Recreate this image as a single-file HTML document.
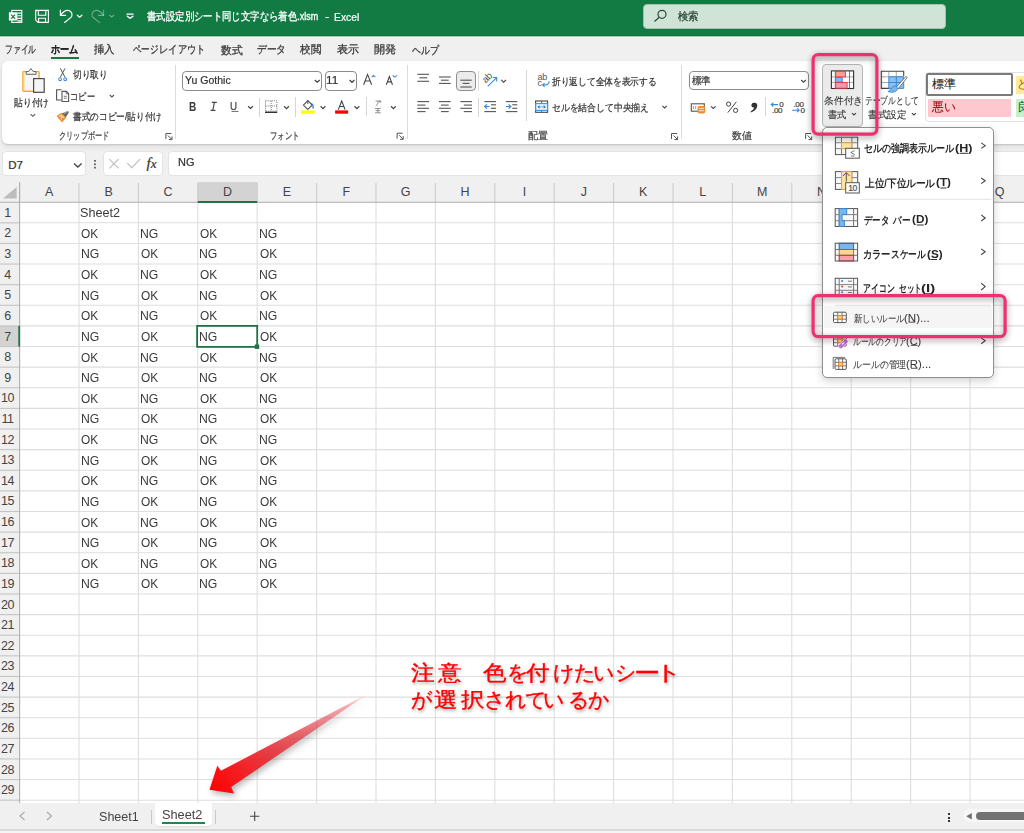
<!DOCTYPE html><html lang="ja"><head><meta charset="utf-8"><style>
*{margin:0;padding:0;box-sizing:border-box}
html,body{width:1024px;height:833px;overflow:hidden;background:#f0f0f0;font-family:"Liberation Sans",sans-serif;color:#262626}
.a{position:absolute}
.t{position:absolute;white-space:nowrap;line-height:1;transform-origin:0 0;-webkit-text-stroke:0.22px}
svg{position:absolute;overflow:visible}
</style></head><body>
<div class="a" style="left:0;top:0;width:1024px;height:35px;background:#127b44"></div><div class="a" style="left:0;top:35px;width:1024px;height:1px;background:#0a733d"></div><div class="a" style="left:0;top:36px;width:1024px;height:1px;background:#a8c9b4"></div><div class="a" style="left:0;top:37px;width:1024px;height:1px;background:#f5f3f3"></div>
<div class="a" style="left:643px;top:4px;width:303px;height:25px;background:#cfe3d6;border:1px solid #a3c2ad;border-radius:4px"></div>
<div class="t" style="left:677.8px;top:11.05px;font-size:10.5px;font-weight:400;color:#1e3b2a;transform:scaleX(0.9409);">検索</div>
<div class="t" style="left:146.7px;top:11.35px;font-size:10.5px;font-weight:400;color:#fff;transform:scaleX(0.8535);-webkit-text-stroke:0.3px;">書式設定別シート同じ文字なら着色.xlsm</div>
<div class="t" style="left:325.0px;top:10.6px;font-size:10.5px;font-weight:400;color:#fff;transform:scaleX(1.2);">-</div>
<div class="t" style="left:334.42px;top:11.9px;font-size:10.5px;font-weight:400;color:#fff;transform:scaleX(0.9833);-webkit-text-stroke:0.2px;">Excel</div>
<svg style="left:0;top:0" width="1" height="1">
<g fill="none" stroke="#fff" stroke-width="1.1">
<rect x="11.8" y="10.4" width="10" height="12"/>
<path d="M17.4 13.1 H21.8 M17.4 15.8 H21.8 M17.4 18.4 H21.8 M17.4 20.9 H21.8"/>
<path d="M35.7 10.4 H48.4 V22.4 H38 L35.7 20.1 Z"/>
<path d="M38.3 10.4 V15.2 H45.8 V10.4"/>
<path d="M38.6 22.4 V18.3 H45.5 V22.4"/>
</g>
<rect x="8.9" y="12.3" width="8.5" height="8.2" fill="#fff"/>
<path d="M11.2 14.6 L15.1 18.9 M15.1 14.6 L11.2 18.9" stroke="#127b44" stroke-width="1.3"/>
<g fill="none" stroke="#fff" stroke-width="1.2" stroke-linecap="round" stroke-linejoin="round">
<path d="M60.6 15.2 C63 11.8 65.5 10.2 68 10.4 C71 10.7 72.6 13.5 71.8 16.2 C71.5 17.2 71 17.8 64.6 22.4"/>
<path d="M60.4 10.2 V15.4 H65.6"/>
<path d="M77.3 15.2 L79.6 17.2 L81.9 15.2"/>
<path d="M127 14.1 H133.1 M127.3 16.2 L130.1 18.3 L132.9 16.2" stroke-width="1.4"/>
</g>
<g fill="none" stroke="rgba(255,255,255,.38)" stroke-width="1.1" stroke-linecap="round" stroke-linejoin="round">
<path d="M103.4 15.2 C101 11.8 98.5 10.2 96 10.4 C93 10.7 91.4 13.5 92.2 16.2 C92.5 17.2 93 17.8 99.6 22.6"/>
<path d="M103.6 10.2 V15.4 H98.4"/>
<path d="M109.6 15.3 L111.7 17 L113.8 15.3"/>
</g>
</svg>
<svg style="left:0;top:0" width="1" height="1"><g fill="none" stroke="#2b4a36" stroke-width="1.2"><circle cx="662" cy="14.3" r="4"/><path d="M659.2 17.2 L654.5 21.5"/></g></svg>
<div class="t" style="left:4.89px;top:44.2px;font-size:11.0px;font-weight:400;color:#3b3b3b;transform:scaleX(0.707);-webkit-text-stroke:0.3px;">ファイル</div>
<div class="t" style="left:51.2px;top:44.2px;font-size:11.0px;font-weight:700;color:#262626;transform:scaleX(0.8303);-webkit-text-stroke:0.12px;">ホーム</div>
<div class="t" style="left:94.3px;top:44.2px;font-size:11.0px;font-weight:400;color:#3b3b3b;transform:scaleX(0.9409);-webkit-text-stroke:0.3px;">挿入</div>
<div class="t" style="left:132.5px;top:44.2px;font-size:11.0px;font-weight:400;color:#3b3b3b;transform:scaleX(0.7719);-webkit-text-stroke:0.3px;">ページ</div>
<div class="t" style="left:221.2px;top:44.7px;font-size:11.0px;font-weight:400;color:#3b3b3b;transform:scaleX(0.9818);-webkit-text-stroke:0.3px;">数式</div>
<div class="t" style="left:257.12px;top:44.2px;font-size:11.0px;font-weight:400;color:#3b3b3b;transform:scaleX(0.8833);-webkit-text-stroke:0.3px;">データ</div>
<div class="t" style="left:300.2px;top:44.2px;font-size:11.0px;font-weight:400;color:#3b3b3b;transform:scaleX(0.9591);-webkit-text-stroke:0.3px;">校閲</div>
<div class="t" style="left:336.7px;top:44.2px;font-size:11.0px;font-weight:400;color:#3b3b3b;transform:scaleX(1.0048);-webkit-text-stroke:0.3px;">表示</div>
<div class="t" style="left:374.0px;top:44.2px;font-size:11.0px;font-weight:400;color:#3b3b3b;transform:scaleX(1.0136);-webkit-text-stroke:0.3px;">開発</div>
<div class="t" style="left:411.5px;top:44.7px;font-size:11.0px;font-weight:400;color:#3b3b3b;transform:scaleX(0.8182);-webkit-text-stroke:0.3px;">ヘルプ</div>
<div class="t" style="left:159.15px;top:44.2px;font-size:11.0px;font-weight:400;color:#3b3b3b;transform:scaleX(0.849);-webkit-text-stroke:0.3px;">レイアウト</div>
<div class="a" style="left:51px;top:57px;width:28px;height:2px;background:#177a43"></div>
<div class="a" style="left:2.4px;top:60.8px;width:1040px;height:83.2px;background:#fff;border-radius:6px;box-shadow:0 1px 2px rgba(0,0,0,.14),0 3px 6px rgba(0,0,0,.07)"></div>
<div class="t" style="left:14.3px;top:97.75px;font-size:10.0px;font-weight:400;color:#333;transform:scaleX(0.8795);">貼り付け</div>
<div class="t" style="left:72.8px;top:69.9px;font-size:10.0px;font-weight:400;color:#333;transform:scaleX(0.8684);">切り取り</div>
<div class="t" style="left:70.45px;top:91.65px;font-size:10.0px;font-weight:400;color:#333;transform:scaleX(0.8259);">コピー</div>
<div class="t" style="left:72.8px;top:112.45px;font-size:10.0px;font-weight:400;color:#333;transform:scaleX(0.8647);">書式のコピー/貼り付け</div>
<div class="t" style="left:58.68px;top:131.3px;font-size:10.0px;font-weight:400;color:#444;transform:scaleX(0.7191);">クリップボード</div>
<div class="t" style="left:269.76px;top:130.9px;font-size:10.0px;font-weight:400;color:#444;transform:scaleX(0.7432);">フォント</div>
<div class="t" style="left:552.4px;top:77.0px;font-size:10.0px;font-weight:400;color:#333;transform:scaleX(0.8714);">折り返して全体を表示する</div>
<div class="t" style="left:551.52px;top:102.75px;font-size:10.0px;font-weight:400;color:#333;transform:scaleX(0.8833);">セルを結合して中央揃え</div>
<div class="t" style="left:527.5px;top:131.05px;font-size:10.0px;font-weight:400;color:#444;transform:scaleX(1.0053);">配置</div>
<div class="t" style="left:732.0px;top:130.7px;font-size:10.0px;font-weight:400;color:#444;transform:scaleX(0.99);">数値</div>
<div class="t" style="left:865.26px;top:96.4px;font-size:10.0px;font-weight:400;color:#333;transform:scaleX(0.7701);-webkit-text-stroke:0.1px;">テーブルとして</div>
<div class="t" style="left:868.0px;top:109.5px;font-size:10.0px;font-weight:400;color:#333;transform:scaleX(0.9692);-webkit-text-stroke:0.1px;">書式設定</div>
<div class="a" style="left:175px;top:65px;width:1px;height:74px;background:#dcdcdc"></div>
<div class="a" style="left:406.5px;top:65px;width:1px;height:74px;background:#dcdcdc"></div>
<div class="a" style="left:681px;top:65px;width:1px;height:74px;background:#dcdcdc"></div>
<div class="a" style="left:259.1px;top:97.5px;width:1px;height:19.299999999999997px;background:#d6d6d6"></div>
<div class="a" style="left:294.9px;top:97.4px;width:1px;height:19.19999999999999px;background:#d6d6d6"></div>
<div class="a" style="left:365.5px;top:97.4px;width:1px;height:19.099999999999994px;background:#d6d6d6"></div>
<div class="a" style="left:478.1px;top:71px;width:1px;height:19.5px;background:#d6d6d6"></div>
<div class="a" style="left:478.1px;top:97.5px;width:1px;height:19.299999999999997px;background:#d6d6d6"></div>
<div class="a" style="left:526.1px;top:70px;width:1px;height:50.599999999999994px;background:#d6d6d6"></div>
<div class="a" style="left:765.4px;top:97px;width:1px;height:19px;background:#d6d6d6"></div>
<svg style="left:0;top:0" width="1" height="1"><path d="M165.9 139 V133.5 H171.4" stroke="#555" stroke-width="1" fill="none"/><path d="M167.9 135.5 L171.9 139.5 M172.0 136.4 V139.6 H168.8" stroke="#555" stroke-width="1" fill="none"/><path d="M397.1 138.7 V133.2 H402.6" stroke="#555" stroke-width="1" fill="none"/><path d="M399.1 135.2 L403.1 139.2 M403.20000000000005 136.1 V139.29999999999998 H400.0" stroke="#555" stroke-width="1" fill="none"/><path d="M671.5 139 V133.5 H677" stroke="#555" stroke-width="1" fill="none"/><path d="M673.5 135.5 L677.5 139.5 M677.6 136.4 V139.6 H674.4" stroke="#555" stroke-width="1" fill="none"/><path d="M805.6 139 V133.5 H811.1" stroke="#555" stroke-width="1" fill="none"/><path d="M807.6 135.5 L811.6 139.5 M811.7 136.4 V139.6 H808.5" stroke="#555" stroke-width="1" fill="none"/></svg>
<svg style="left:0;top:0" width="1" height="1">
<rect x="22.9" y="71.7" width="16.2" height="19.6" rx="0.8" fill="#f6f5f5" stroke="#f0a22e" stroke-width="1.3"/>
<path d="M24 72.6 V90.3 H33" stroke="#fbd96a" stroke-width="0.8" fill="none"/>
<path d="M26.2 74.3 V71.5 H28.6 L30.9 68.6 L33.2 71.5 H36 V74.3 Z" fill="#f6f5f5" stroke="#666" stroke-width="1"/>
<rect x="33.6" y="78.6" width="10.6" height="13.7" fill="#f6f5f5" stroke="#4a4a4a" stroke-width="1.2"/>
<path d="M30.6 114.2 L32.9 116.3 L35.2 114.2" stroke="#555" stroke-width="1.1" fill="none"/>
<path d="M60.3 68.4 L65 77.2 M65 68.4 L60.3 77.2" stroke="#555" stroke-width="1"/>
<circle cx="60.1" cy="79.2" r="1.4" fill="#fff" stroke="#3a8ee0" stroke-width="1.1"/>
<circle cx="65.2" cy="79.2" r="1.4" fill="#fff" stroke="#3a8ee0" stroke-width="1.1"/>
<path d="M61.5 89.7 H56.6 V100 H61.5" stroke="#555" stroke-width="1.1" fill="none"/>
<path d="M62 91.4 H66.4 L68.6 93.6 V101.5 H62 Z" fill="#fff" stroke="#555" stroke-width="1.1"/>
<path d="M66.2 91.5 V93.8 H68.5 M63.8 96.3 H66.8 M63.8 98.2 H66.8" stroke="#555" stroke-width="0.8" fill="none"/>
<path d="M109.8 95 L111.9 97 L114 95" stroke="#555" stroke-width="1.1" fill="none"/>
<path d="M56.5 116 L61.3 112.8 L66.4 117.4 L62 122.4 Z" fill="#f0922e"/>
<path d="M58.6 116.3 L61.3 114.3 L64.6 117.3 L61.9 120.2 Z" fill="#fbd08a"/>
<circle cx="60" cy="117.6" r="0.7" fill="#e04040"/><circle cx="62.6" cy="119" r="0.7" fill="#e04040"/>
<path d="M61.7 113.6 L65.9 117.3 L69 111.9 L67.6 110.9 Z" fill="#666"/>
<path d="M63.6 113.9 L67.6 111.5" stroke="#ddd" stroke-width="0.7"/>
</svg>
<div class="a" style="left:182.3px;top:71.1px;width:140px;height:19.6px;background:#fff;border:1px solid #8c8c8c;border-radius:4px"></div>
<div class="a" style="left:324.6px;top:71.1px;width:32.4px;height:19.6px;background:#fff;border:1px solid #8c8c8c;border-radius:4px"></div>
<div class="t" style="left:185.3px;top:75.2px;font-size:11.0px;font-weight:400;color:#333;transform:scaleX(0.9583);">Yu Gothic</div>
<div class="t" style="left:326.23px;top:75.2px;font-size:11.0px;font-weight:400;color:#333;transform:scaleX(1.07);">11</div>
<svg style="left:0;top:0" width="1" height="1">
<path d="M314.8 80 L317.3 82.3 L319.8 80 M349.6 80 L352 82.3 L354.4 80" stroke="#444" stroke-width="1.2" fill="none"/>
<path d="M363.6 84.7 L367.6 74.4 L371.6 84.7 M365.1 81 H370.1" stroke="#444" stroke-width="1.1" fill="none"/>
<path d="M371.6 77.2 L373.5 75.5 L375.4 77.2" stroke="#3a8ee0" stroke-width="1.1" fill="none"/>
<path d="M386.3 84.7 L389.4 76.6 L392.5 84.7 M387.5 81.9 H391.3" stroke="#444" stroke-width="1.1" fill="none"/>
<path d="M392.6 75.4 L394.8 77.1 L397 75.4" stroke="#3a8ee0" stroke-width="1.2" fill="none"/>
<path d="M248.1 106.2 L250.5 108.5 L252.9 106.2 M284.1 106.3 L286.5 108.6 L288.9 106.3 M320.6 106.3 L323 108.6 L325.4 106.3 M354.5 106.3 L356.9 108.6 L359.3 106.3 M391 106.3 L393.4 108.6 L395.8 106.3" stroke="#444" stroke-width="1.2" fill="none"/>
<path d="M231.6 111.4 H238.4" stroke="#555" stroke-width="0.9"/>
<rect x="265.5" y="100.8" width="11.4" height="10.4" fill="none" stroke="#666" stroke-width="0.9" stroke-dasharray="1 1.1"/>
<path d="M271.2 100.8 V111 M265.5 106 H277" stroke="#666" stroke-width="0.9" stroke-dasharray="1 1.1"/>
<path d="M265 112.3 H277.2" stroke="#333" stroke-width="1.4"/>
<path d="M303.4 105.1 L307.8 100.6 L312.2 105 L307.8 109.5 Z" fill="#fff" stroke="#555" stroke-width="1.1"/>
<path d="M307.8 100.6 L307.8 104" stroke="#555" stroke-width="1"/>
<path d="M311.2 103.5 C312.8 104.2 313.5 105.8 313 108.6" stroke="#2f7fd0" stroke-width="1.3" fill="none"/>
<rect x="301" y="110.4" width="13.7" height="3.4" fill="#ffff00"/>
<path d="M338.3 109.6 L341.7 101 L345.1 109.6 M339.5 106.5 H344" stroke="#444" stroke-width="1.1" fill="none"/>
<rect x="335.1" y="110.4" width="13" height="3.3" fill="#ff0000"/>
<path d="M375.6 101 H380.2 M378.2 101 C378.2 103.5 377.4 104.8 375.8 105.8 M379.8 100.6 V102.6 M380.8 100.6 V102.6" stroke="#777" stroke-width="0.8" fill="none"/>
<path d="M375 108.5 H380.8 M375.6 110.6 H380.2 M375 112.8 H380.8 M377.9 108.5 V112.8" stroke="#888" stroke-width="0.9" fill="none"/>
</svg>
<div class="t" style="left:189.2px;top:101.2px;font-size:12px;font-weight:bold;color:#3a3a3a;-webkit-text-stroke:0;transform:scaleX(.84)">B</div>
<svg style="left:0;top:0" width="1" height="1"><path d="M211.8 102.4 H216.8 M210.6 110.4 H215.4 M214.4 102.4 L212.8 110.4" stroke="#444" stroke-width="1.1" fill="none"/></svg>
<div class="t" style="left:230.4px;top:100.8px;font-size:11.5px;color:#444;transform:scaleX(.85)">U</div>
<svg style="left:0;top:0" width="1" height="1"><path d="M417.3 74.3 H429" stroke="#555" stroke-width="1.1"/><path d="M419.3 77.8 H427.3" stroke="#555" stroke-width="1.1"/><path d="M417.3 81.3 H429" stroke="#555" stroke-width="1.1"/><path d="M439 77 H450.7" stroke="#555" stroke-width="1.1"/><path d="M441 80.2 H448.7" stroke="#555" stroke-width="1.1"/><path d="M439 83.4 H450.7" stroke="#555" stroke-width="1.1"/><path d="M460 80.2 H472" stroke="#555" stroke-width="1.1"/><path d="M462.4 83.4 H469.6" stroke="#555" stroke-width="1.1"/><path d="M460 87 H472" stroke="#555" stroke-width="1.1"/><path d="M417.3 101.6 H429" stroke="#555" stroke-width="1.1"/><path d="M417.3 105.1 H425.5" stroke="#555" stroke-width="1.1"/><path d="M417.3 108.3 H429" stroke="#555" stroke-width="1.1"/><path d="M417.3 111.6 H425.5" stroke="#555" stroke-width="1.1"/><path d="M439 101.6 H450.7" stroke="#555" stroke-width="1.1"/><path d="M441 105.1 H448.7" stroke="#555" stroke-width="1.1"/><path d="M439 108.3 H450.7" stroke="#555" stroke-width="1.1"/><path d="M441 111.6 H448.7" stroke="#555" stroke-width="1.1"/><path d="M460.3 101.6 H472" stroke="#555" stroke-width="1.1"/><path d="M463.8 105.1 H472" stroke="#555" stroke-width="1.1"/><path d="M460.3 108.3 H472" stroke="#555" stroke-width="1.1"/><path d="M463.8 111.6 H472" stroke="#555" stroke-width="1.1"/><path d="M484.3 101.6 H496" stroke="#555" stroke-width="1.1"/><path d="M491 104.8 H496" stroke="#555" stroke-width="1.1"/><path d="M491 108.3 H496" stroke="#555" stroke-width="1.1"/><path d="M484.3 111.6 H496" stroke="#555" stroke-width="1.1"/><path d="M505.8 101.6 H517.3" stroke="#555" stroke-width="1.1"/><path d="M512.3 104.8 H517.3" stroke="#555" stroke-width="1.1"/><path d="M512.3 108.3 H517.3" stroke="#555" stroke-width="1.1"/><path d="M505.8 111.6 H517.3" stroke="#555" stroke-width="1.1"/><path d="M489.6 106.5 H484.8 M486.9 104.4 L484.7 106.5 L486.9 108.6" stroke="#2f8ee0" stroke-width="1.2" fill="none"/><path d="M505.9 106.5 H510.7 M508.6 104.4 L510.8 106.5 L508.6 108.6" stroke="#2f8ee0" stroke-width="1.2" fill="none"/><path d="M487.8 86.4 L496.6 77.6 M492.8 77.5 H496.7 V81.4" stroke="#2f8ee0" stroke-width="1.1" fill="none"/><path d="M501.2 79.9 L503.6 82.2 L506 79.9 M662.4 105.8 L664.6 108 L666.8 105.8 M711 106.3 L713.3 108.5 L715.6 106.3" stroke="#444" stroke-width="1.1" fill="none"/><path d="M549 81.2 C549.6 84 547 85.3 542.8 85 M544.6 83.2 L542.6 85 L544.6 86.8" stroke="#2f8ee0" stroke-width="1.1" fill="none"/><rect x="535.6" y="101" width="12" height="11.3" fill="#fff" stroke="#444" stroke-width="1.1"/><path d="M541.6 101 V103.5 M541.6 110.3 V112.3" stroke="#555" stroke-width="0.9"/><rect x="535.7" y="103.6" width="11.8" height="6.8" fill="#f4f9fe" stroke="#3f9ae6" stroke-width="1.2"/><path d="M539 106.9 H544.2" stroke="#5fa8ea" stroke-width="1"/><path d="M537.3 106.9 L539.6 105.1 V108.7 Z M546 106.9 L543.7 105.1 V108.7 Z" fill="#2a7fd4"/></svg>
<div class="a" style="left:456.2px;top:71.1px;width:19.7px;height:19.6px;background:#ebebeb;border:1px solid #8f8f8f;border-radius:4px"></div>
<svg style="left:0;top:0" width="1" height="1"><path d="M460.3 80.2 H471.7" stroke="#555" stroke-width="1.1"/><path d="M462.6 83.4 H469.4" stroke="#555" stroke-width="1.1"/><path d="M460.3 87 H471.7" stroke="#555" stroke-width="1.1"/></svg>
<div class="t" style="left:482.4px;top:72.8px;font-size:9.6px;color:#555;-webkit-text-stroke:0;transform:rotate(-45deg);transform-origin:50% 50%;letter-spacing:-0.4px">ab</div>
<div class="t" style="left:537.4px;top:73.2px;font-size:9px;color:#555;-webkit-text-stroke:0;letter-spacing:-0.2px">ab</div>
<div class="t" style="left:537.5px;top:79.4px;font-size:9px;color:#555;-webkit-text-stroke:0">c</div>
<div class="a" style="left:688.5px;top:71.2px;width:120px;height:19.2px;background:#fff;border:1px solid #8c8c8c;border-radius:4px"></div>
<div class="t" style="left:691.6px;top:75.65px;font-size:10.0px;font-weight:400;color:#333;transform:scaleX(0.94);">標準</div>
<svg style="left:0;top:0" width="1" height="1"><path d="M801.2 80 L803.5 82.2 L805.8 80" stroke="#444" stroke-width="1.2" fill="none"/><rect x="691.3" y="103.8" width="13" height="7.4" fill="#fff" stroke="#555" stroke-width="1.1"/><path d="M694 106 C693 107.5 693 108 694 109.3 M696 106.3 C695.3 107.5 695.3 108 696 109" stroke="#666" stroke-width="0.8" fill="none"/><rect x="697.6" y="106" width="7.6" height="7.4" rx="1.6" fill="#ee8d34"/><path d="M699 108.4 H703.8 M699 110.7 H703.8" stroke="#fff" stroke-width="0.8"/><path d="M727.8 112.6 L736.4 101.8" stroke="#444" stroke-width="1"/><circle cx="728.6" cy="104.1" r="2.1" fill="none" stroke="#444" stroke-width="1"/><circle cx="735.6" cy="110.4" r="2.1" fill="none" stroke="#444" stroke-width="1"/><path d="M753.6 102.8 C756.2 102.3 757.8 104 757.2 106.6 C756.6 109.6 754 111.6 750.8 112.4 L750.5 111.5 C752.4 110.6 753.7 109.4 754.2 107.6 C752.5 107.6 751.3 106.6 751.4 105.2 C751.5 103.8 752.4 103 753.6 102.8 Z" fill="#333"/><path d="M778 104.6 H771.2 M773.4 102.6 L771.2 104.6 L773.4 106.6" stroke="#2f8ee0" stroke-width="1.1" fill="none"/><path d="M792.2 110.2 H799.2 M797 108.2 L799.2 110.2 L797 112.2" stroke="#2f8ee0" stroke-width="1.1" fill="none"/></svg>
<div class="t" style="left:779.3px;top:101.2px;font-size:8px;color:#444;letter-spacing:-0.3px">0</div>
<div class="t" style="left:772px;top:107px;font-size:8px;color:#444;letter-spacing:-0.3px">.00</div>
<div class="t" style="left:793.4px;top:101.2px;font-size:8px;color:#444;letter-spacing:-0.3px">.00</div>
<div class="t" style="left:800.6px;top:107px;font-size:8px;color:#444;letter-spacing:-0.3px">0</div>
<div class="a" style="left:822.4px;top:64.2px;width:40.2px;height:62.4px;background:#ebebeb;border:1px solid #b5b5b5;border-radius:4px"></div>
<svg style="left:0;top:0" width="1" height="1"><rect x="831.4" y="70.9" width="22.2" height="17.6" fill="#fff"/><path d="M831.4 76.9 H853.6 M831.4 82.4 H853.6 M835.2 70.9 V88.5" stroke="#9a9a9a" stroke-width="0.9"/><path d="M849.5 70.9 V88.5" stroke="#777" stroke-width="1"/><rect x="831.4" y="70.9" width="22.2" height="17.6" fill="none" stroke="#333" stroke-width="1.1"/><rect x="835.6" y="71.3" width="9.8" height="5.6" fill="#f99aa3" stroke="#e8303c" stroke-width="0.9"/><rect x="835.6" y="77.5" width="6.6" height="4.6" fill="#7cbcf0" stroke="#2a86da" stroke-width="0.9"/><rect x="835.6" y="82.6" width="11.5" height="5.6" fill="#f99aa3" stroke="#e8303c" stroke-width="0.9"/><path d="M852 113.2 L854 115 L856 113.2 M911.9 113.2 L913.9 115 L915.9 113.2" stroke="#444" stroke-width="1.1" fill="none"/><rect x="881.3" y="71.3" width="22.4" height="17.1" fill="#fff"/><path d="M881.3 76.8 H903.7 M881.3 82.5 H888.8 M888.8 71.3 V76.8 M896.3 71.3 V76.8" stroke="#aaa" stroke-width="1"/><rect x="888.8" y="76.8" width="14.9" height="11.6" fill="#8cc0f0"/><path d="M888.8 76.8 H903.7 V88.4 H888.8 Z M888.8 82.5 H903.7 M896.3 76.8 V88.4" stroke="#2f82d6" stroke-width="0.9" fill="none"/><path d="M888.8 88.4 H881.3 V71.3 H903.7 V76" stroke="#444" stroke-width="1.1" fill="none"/><path d="M906.9 78 C907.3 77 906.6 76.3 905.6 76.7 L896.1 87.4 L897.9 88.9 Z" fill="#fff" stroke="#555" stroke-width="0.8"/><path d="M897.8 88.8 C896.8 91.6 893.2 93.2 887.9 91.6 C889.6 90.9 890.6 89.6 891.7 87.8 C893 86 895.4 85.4 896.6 86.8 Z" fill="#7ab6ec" stroke="#2f82d6" stroke-width="0.8"/></svg>
<div class="t" style="left:823.6px;top:96.4px;font-size:10.0px;font-weight:400;color:#333;transform:scaleX(0.9789);-webkit-text-stroke:0.1px;">条件付き</div>
<div class="t" style="left:828.4px;top:109.5px;font-size:10.0px;font-weight:400;color:#333;transform:scaleX(0.93);-webkit-text-stroke:0.1px;">書式</div>
<div class="a" style="left:924.8px;top:71.5px;width:120px;height:50px;background:#fff;border:1px solid #e1e1e1;border-radius:4px"></div>
<div class="a" style="left:926.2px;top:73.3px;width:86.7px;height:22.9px;background:#fff;border:2px solid #7b7b7b;border-radius:2px"></div>
<div class="a" style="left:928px;top:98.9px;width:82.8px;height:18.1px;background:#ffc7ce"></div>
<div class="a" style="left:1015.6px;top:76px;width:20px;height:17.9px;background:#ffeb9c"></div>
<div class="a" style="left:1015.6px;top:98.9px;width:20px;height:18.1px;background:#c6efce"></div>
<div class="t" style="left:932.0px;top:78.9px;font-size:11.5px;font-weight:400;color:#222;transform:scaleX(1.0);-webkit-text-stroke:0.1px;">標準</div>
<div class="t" style="left:932.0px;top:101.6px;font-size:11.5px;font-weight:400;color:#9c0006;transform:scaleX(0.9792);-webkit-text-stroke:0.1px;">悪い</div>
<div class="t" style="left:1017px;top:79px;font-size:11.5px;color:#9c5700;-webkit-text-stroke:0">ど</div>
<div class="t" style="left:1017px;top:101.6px;font-size:11.5px;color:#006100;-webkit-text-stroke:0">良</div>
<div class="a" style="left:2.4px;top:151.4px;width:83.8px;height:24.6px;background:#fff;border:1px solid #e3e3e3;border-radius:4px"></div>
<div class="t" style="left:8.3px;top:160px;font-size:11.5px;color:#333">D7</div>
<div class="a" style="left:103.4px;top:151.4px;width:59.8px;height:24.6px;background:#fff;border:1px solid #e3e3e3;border-radius:4px"></div>
<div class="a" style="left:168.3px;top:151.4px;width:870px;height:24.6px;background:#fff;border:1px solid #e3e3e3;border-radius:4px"></div>
<div class="t" style="left:178.3px;top:156.8px;font-size:11.5px;color:#333;transform:scaleX(.95)">NG</div>
<svg style="left:0;top:0" width="1" height="1">
<path d="M74 163.5 L77.8 167 L81.6 163.5" fill="none" stroke="#444" stroke-width="1.3"/>
<rect x="94.1" y="160" width="1.7" height="1.7" fill="#555"/><rect x="94.1" y="163.4" width="1.7" height="1.7" fill="#555"/><rect x="94.1" y="166.8" width="1.7" height="1.7" fill="#555"/>
<path d="M109.3 159.2 L118.6 168.3 M118.6 159.2 L109.3 168.3" stroke="#bdbdbd" stroke-width="1.1"/>
<path d="M127.2 163.2 L131.8 167.7 L140 159.1" fill="none" stroke="#bdbdbd" stroke-width="1.1"/>
</svg>
<div class="t" style="left:146.5px;top:156px;font-family:'Liberation Serif',serif;font-style:italic;font-size:15px;color:#333">f<span style="font-size:13px">x</span></div>
<div class="a" style="left:20px;top:202.2px;width:1010px;height:600.8px;background:#fff"></div>
<div class="a" style="left:0;top:182px;width:1024px;height:20.5px;background:#f0f0f0"></div>
<svg style="left:0;top:0" width="1" height="1"><path d="M79.00 202.2 V803" stroke="#dedede" stroke-width="1.1"/><path d="M138.40 202.2 V803" stroke="#dedede" stroke-width="1.1"/><path d="M197.80 202.2 V803" stroke="#dedede" stroke-width="1.1"/><path d="M257.20 202.2 V803" stroke="#dedede" stroke-width="1.1"/><path d="M316.60 202.2 V803" stroke="#dedede" stroke-width="1.1"/><path d="M376.00 202.2 V803" stroke="#dedede" stroke-width="1.1"/><path d="M435.40 202.2 V803" stroke="#dedede" stroke-width="1.1"/><path d="M494.80 202.2 V803" stroke="#dedede" stroke-width="1.1"/><path d="M554.20 202.2 V803" stroke="#dedede" stroke-width="1.1"/><path d="M613.60 202.2 V803" stroke="#dedede" stroke-width="1.1"/><path d="M673.00 202.2 V803" stroke="#dedede" stroke-width="1.1"/><path d="M732.40 202.2 V803" stroke="#dedede" stroke-width="1.1"/><path d="M791.80 202.2 V803" stroke="#dedede" stroke-width="1.1"/><path d="M851.20 202.2 V803" stroke="#dedede" stroke-width="1.1"/><path d="M910.60 202.2 V803" stroke="#dedede" stroke-width="1.1"/><path d="M970.00 202.2 V803" stroke="#dedede" stroke-width="1.1"/><path d="M1029.40 202.2 V803" stroke="#dedede" stroke-width="1.1"/><path d="M20 222.82 H1024" stroke="#dedede" stroke-width="1.1"/><path d="M20 243.44 H1024" stroke="#dedede" stroke-width="1.1"/><path d="M20 264.06 H1024" stroke="#dedede" stroke-width="1.1"/><path d="M20 284.68 H1024" stroke="#dedede" stroke-width="1.1"/><path d="M20 305.30 H1024" stroke="#dedede" stroke-width="1.1"/><path d="M20 325.92 H1024" stroke="#dedede" stroke-width="1.1"/><path d="M20 346.54 H1024" stroke="#dedede" stroke-width="1.1"/><path d="M20 367.16 H1024" stroke="#dedede" stroke-width="1.1"/><path d="M20 387.78 H1024" stroke="#dedede" stroke-width="1.1"/><path d="M20 408.40 H1024" stroke="#dedede" stroke-width="1.1"/><path d="M20 429.02 H1024" stroke="#dedede" stroke-width="1.1"/><path d="M20 449.64 H1024" stroke="#dedede" stroke-width="1.1"/><path d="M20 470.26 H1024" stroke="#dedede" stroke-width="1.1"/><path d="M20 490.88 H1024" stroke="#dedede" stroke-width="1.1"/><path d="M20 511.50 H1024" stroke="#dedede" stroke-width="1.1"/><path d="M20 532.12 H1024" stroke="#dedede" stroke-width="1.1"/><path d="M20 552.74 H1024" stroke="#dedede" stroke-width="1.1"/><path d="M20 573.36 H1024" stroke="#dedede" stroke-width="1.1"/><path d="M20 593.98 H1024" stroke="#dedede" stroke-width="1.1"/><path d="M20 614.60 H1024" stroke="#dedede" stroke-width="1.1"/><path d="M20 635.22 H1024" stroke="#dedede" stroke-width="1.1"/><path d="M20 655.84 H1024" stroke="#dedede" stroke-width="1.1"/><path d="M20 676.46 H1024" stroke="#dedede" stroke-width="1.1"/><path d="M20 697.08 H1024" stroke="#dedede" stroke-width="1.1"/><path d="M20 717.70 H1024" stroke="#dedede" stroke-width="1.1"/><path d="M20 738.32 H1024" stroke="#dedede" stroke-width="1.1"/><path d="M20 758.94 H1024" stroke="#dedede" stroke-width="1.1"/><path d="M20 779.56 H1024" stroke="#dedede" stroke-width="1.1"/><path d="M20 800.18 H1024" stroke="#dedede" stroke-width="1.1"/><rect x="197.80" y="182" width="59.40" height="20.2" fill="#d3d3d3"/><rect x="0" y="325.92" width="19.6" height="20.62" fill="#d3d3d3"/><path d="M19.60 183 V202" stroke="#cdcdcd" stroke-width="1.1"/><path d="M79.00 183 V202" stroke="#cdcdcd" stroke-width="1.1"/><path d="M138.40 183 V202" stroke="#cdcdcd" stroke-width="1.1"/><path d="M197.80 183 V202" stroke="#cdcdcd" stroke-width="1.1"/><path d="M257.20 183 V202" stroke="#cdcdcd" stroke-width="1.1"/><path d="M316.60 183 V202" stroke="#cdcdcd" stroke-width="1.1"/><path d="M376.00 183 V202" stroke="#cdcdcd" stroke-width="1.1"/><path d="M435.40 183 V202" stroke="#cdcdcd" stroke-width="1.1"/><path d="M494.80 183 V202" stroke="#cdcdcd" stroke-width="1.1"/><path d="M554.20 183 V202" stroke="#cdcdcd" stroke-width="1.1"/><path d="M613.60 183 V202" stroke="#cdcdcd" stroke-width="1.1"/><path d="M673.00 183 V202" stroke="#cdcdcd" stroke-width="1.1"/><path d="M732.40 183 V202" stroke="#cdcdcd" stroke-width="1.1"/><path d="M791.80 183 V202" stroke="#cdcdcd" stroke-width="1.1"/><path d="M851.20 183 V202" stroke="#cdcdcd" stroke-width="1.1"/><path d="M910.60 183 V202" stroke="#cdcdcd" stroke-width="1.1"/><path d="M970.00 183 V202" stroke="#cdcdcd" stroke-width="1.1"/><path d="M1029.40 183 V202" stroke="#cdcdcd" stroke-width="1.1"/><path d="M0 222.82 H19.6" stroke="#c4c4c4" stroke-width="1.1"/><path d="M0 243.44 H19.6" stroke="#c4c4c4" stroke-width="1.1"/><path d="M0 264.06 H19.6" stroke="#c4c4c4" stroke-width="1.1"/><path d="M0 284.68 H19.6" stroke="#c4c4c4" stroke-width="1.1"/><path d="M0 305.30 H19.6" stroke="#c4c4c4" stroke-width="1.1"/><path d="M0 325.92 H19.6" stroke="#c4c4c4" stroke-width="1.1"/><path d="M0 346.54 H19.6" stroke="#c4c4c4" stroke-width="1.1"/><path d="M0 367.16 H19.6" stroke="#c4c4c4" stroke-width="1.1"/><path d="M0 387.78 H19.6" stroke="#c4c4c4" stroke-width="1.1"/><path d="M0 408.40 H19.6" stroke="#c4c4c4" stroke-width="1.1"/><path d="M0 429.02 H19.6" stroke="#c4c4c4" stroke-width="1.1"/><path d="M0 449.64 H19.6" stroke="#c4c4c4" stroke-width="1.1"/><path d="M0 470.26 H19.6" stroke="#c4c4c4" stroke-width="1.1"/><path d="M0 490.88 H19.6" stroke="#c4c4c4" stroke-width="1.1"/><path d="M0 511.50 H19.6" stroke="#c4c4c4" stroke-width="1.1"/><path d="M0 532.12 H19.6" stroke="#c4c4c4" stroke-width="1.1"/><path d="M0 552.74 H19.6" stroke="#c4c4c4" stroke-width="1.1"/><path d="M0 573.36 H19.6" stroke="#c4c4c4" stroke-width="1.1"/><path d="M0 593.98 H19.6" stroke="#c4c4c4" stroke-width="1.1"/><path d="M0 614.60 H19.6" stroke="#c4c4c4" stroke-width="1.1"/><path d="M0 635.22 H19.6" stroke="#c4c4c4" stroke-width="1.1"/><path d="M0 655.84 H19.6" stroke="#c4c4c4" stroke-width="1.1"/><path d="M0 676.46 H19.6" stroke="#c4c4c4" stroke-width="1.1"/><path d="M0 697.08 H19.6" stroke="#c4c4c4" stroke-width="1.1"/><path d="M0 717.70 H19.6" stroke="#c4c4c4" stroke-width="1.1"/><path d="M0 738.32 H19.6" stroke="#c4c4c4" stroke-width="1.1"/><path d="M0 758.94 H19.6" stroke="#c4c4c4" stroke-width="1.1"/><path d="M0 779.56 H19.6" stroke="#c4c4c4" stroke-width="1.1"/><path d="M0 800.18 H19.6" stroke="#c4c4c4" stroke-width="1.1"/><path d="M0 202.2 H1024" stroke="#b0b0b0" stroke-width="1.1"/><path d="M19.6 182 V803" stroke="#b0b0b0" stroke-width="1.1"/><path d="M197.80 202 H257.20" stroke="#217346" stroke-width="1.8"/><path d="M19.2 325.92 V346.54" stroke="#217346" stroke-width="1.8"/><path d="M16.6 187 L16.6 198.6 L3 198.6 Z" fill="#bdbdbd"/></svg>
<div class="t" style="left:19.60px;top:186.2px;width:59.40px;text-align:center;font-size:12.5px;color:#444;-webkit-text-stroke:0">A</div>
<div class="t" style="left:79.00px;top:186.2px;width:59.40px;text-align:center;font-size:12.5px;color:#444;-webkit-text-stroke:0">B</div>
<div class="t" style="left:138.40px;top:186.2px;width:59.40px;text-align:center;font-size:12.5px;color:#444;-webkit-text-stroke:0">C</div>
<div class="t" style="left:197.80px;top:186.2px;width:59.40px;text-align:center;font-size:12.5px;color:#444;-webkit-text-stroke:0">D</div>
<div class="t" style="left:257.20px;top:186.2px;width:59.40px;text-align:center;font-size:12.5px;color:#444;-webkit-text-stroke:0">E</div>
<div class="t" style="left:316.60px;top:186.2px;width:59.40px;text-align:center;font-size:12.5px;color:#444;-webkit-text-stroke:0">F</div>
<div class="t" style="left:376.00px;top:186.2px;width:59.40px;text-align:center;font-size:12.5px;color:#444;-webkit-text-stroke:0">G</div>
<div class="t" style="left:435.40px;top:186.2px;width:59.40px;text-align:center;font-size:12.5px;color:#444;-webkit-text-stroke:0">H</div>
<div class="t" style="left:494.80px;top:186.2px;width:59.40px;text-align:center;font-size:12.5px;color:#444;-webkit-text-stroke:0">I</div>
<div class="t" style="left:554.20px;top:186.2px;width:59.40px;text-align:center;font-size:12.5px;color:#444;-webkit-text-stroke:0">J</div>
<div class="t" style="left:613.60px;top:186.2px;width:59.40px;text-align:center;font-size:12.5px;color:#444;-webkit-text-stroke:0">K</div>
<div class="t" style="left:673.00px;top:186.2px;width:59.40px;text-align:center;font-size:12.5px;color:#444;-webkit-text-stroke:0">L</div>
<div class="t" style="left:732.40px;top:186.2px;width:59.40px;text-align:center;font-size:12.5px;color:#444;-webkit-text-stroke:0">M</div>
<div class="t" style="left:791.80px;top:186.2px;width:59.40px;text-align:center;font-size:12.5px;color:#444;-webkit-text-stroke:0">N</div>
<div class="t" style="left:851.20px;top:186.2px;width:59.40px;text-align:center;font-size:12.5px;color:#444;-webkit-text-stroke:0">O</div>
<div class="t" style="left:910.60px;top:186.2px;width:59.40px;text-align:center;font-size:12.5px;color:#444;-webkit-text-stroke:0">P</div>
<div class="t" style="left:970.00px;top:186.2px;width:59.40px;text-align:center;font-size:12.5px;color:#444;-webkit-text-stroke:0">Q</div>
<div class="t" style="left:0;width:15.2px;text-align:center;top:206.80px;font-size:12.5px;color:#444;letter-spacing:-0.3px;-webkit-text-stroke:0">1</div>
<div class="t" style="left:0;width:15.2px;text-align:center;top:227.42px;font-size:12.5px;color:#444;letter-spacing:-0.3px;-webkit-text-stroke:0">2</div>
<div class="t" style="left:0;width:15.2px;text-align:center;top:248.04px;font-size:12.5px;color:#444;letter-spacing:-0.3px;-webkit-text-stroke:0">3</div>
<div class="t" style="left:0;width:15.2px;text-align:center;top:268.66px;font-size:12.5px;color:#444;letter-spacing:-0.3px;-webkit-text-stroke:0">4</div>
<div class="t" style="left:0;width:15.2px;text-align:center;top:289.28px;font-size:12.5px;color:#444;letter-spacing:-0.3px;-webkit-text-stroke:0">5</div>
<div class="t" style="left:0;width:15.2px;text-align:center;top:309.90px;font-size:12.5px;color:#444;letter-spacing:-0.3px;-webkit-text-stroke:0">6</div>
<div class="t" style="left:0;width:15.2px;text-align:center;top:330.52px;font-size:12.5px;color:#444;letter-spacing:-0.3px;-webkit-text-stroke:0">7</div>
<div class="t" style="left:0;width:15.2px;text-align:center;top:351.14px;font-size:12.5px;color:#444;letter-spacing:-0.3px;-webkit-text-stroke:0">8</div>
<div class="t" style="left:0;width:15.2px;text-align:center;top:371.76px;font-size:12.5px;color:#444;letter-spacing:-0.3px;-webkit-text-stroke:0">9</div>
<div class="t" style="left:0;width:15.2px;text-align:center;top:392.38px;font-size:12.5px;color:#444;letter-spacing:-0.3px;-webkit-text-stroke:0">10</div>
<div class="t" style="left:0;width:15.2px;text-align:center;top:413.00px;font-size:12.5px;color:#444;letter-spacing:-0.3px;-webkit-text-stroke:0">11</div>
<div class="t" style="left:0;width:15.2px;text-align:center;top:433.62px;font-size:12.5px;color:#444;letter-spacing:-0.3px;-webkit-text-stroke:0">12</div>
<div class="t" style="left:0;width:15.2px;text-align:center;top:454.24px;font-size:12.5px;color:#444;letter-spacing:-0.3px;-webkit-text-stroke:0">13</div>
<div class="t" style="left:0;width:15.2px;text-align:center;top:474.86px;font-size:12.5px;color:#444;letter-spacing:-0.3px;-webkit-text-stroke:0">14</div>
<div class="t" style="left:0;width:15.2px;text-align:center;top:495.48px;font-size:12.5px;color:#444;letter-spacing:-0.3px;-webkit-text-stroke:0">15</div>
<div class="t" style="left:0;width:15.2px;text-align:center;top:516.10px;font-size:12.5px;color:#444;letter-spacing:-0.3px;-webkit-text-stroke:0">16</div>
<div class="t" style="left:0;width:15.2px;text-align:center;top:536.72px;font-size:12.5px;color:#444;letter-spacing:-0.3px;-webkit-text-stroke:0">17</div>
<div class="t" style="left:0;width:15.2px;text-align:center;top:557.34px;font-size:12.5px;color:#444;letter-spacing:-0.3px;-webkit-text-stroke:0">18</div>
<div class="t" style="left:0;width:15.2px;text-align:center;top:577.96px;font-size:12.5px;color:#444;letter-spacing:-0.3px;-webkit-text-stroke:0">19</div>
<div class="t" style="left:0;width:15.2px;text-align:center;top:598.58px;font-size:12.5px;color:#444;letter-spacing:-0.3px;-webkit-text-stroke:0">20</div>
<div class="t" style="left:0;width:15.2px;text-align:center;top:619.20px;font-size:12.5px;color:#444;letter-spacing:-0.3px;-webkit-text-stroke:0">21</div>
<div class="t" style="left:0;width:15.2px;text-align:center;top:639.82px;font-size:12.5px;color:#444;letter-spacing:-0.3px;-webkit-text-stroke:0">22</div>
<div class="t" style="left:0;width:15.2px;text-align:center;top:660.44px;font-size:12.5px;color:#444;letter-spacing:-0.3px;-webkit-text-stroke:0">23</div>
<div class="t" style="left:0;width:15.2px;text-align:center;top:681.06px;font-size:12.5px;color:#444;letter-spacing:-0.3px;-webkit-text-stroke:0">24</div>
<div class="t" style="left:0;width:15.2px;text-align:center;top:701.68px;font-size:12.5px;color:#444;letter-spacing:-0.3px;-webkit-text-stroke:0">25</div>
<div class="t" style="left:0;width:15.2px;text-align:center;top:722.30px;font-size:12.5px;color:#444;letter-spacing:-0.3px;-webkit-text-stroke:0">26</div>
<div class="t" style="left:0;width:15.2px;text-align:center;top:742.92px;font-size:12.5px;color:#444;letter-spacing:-0.3px;-webkit-text-stroke:0">27</div>
<div class="t" style="left:0;width:15.2px;text-align:center;top:763.54px;font-size:12.5px;color:#444;letter-spacing:-0.3px;-webkit-text-stroke:0">28</div>
<div class="t" style="left:0;width:15.2px;text-align:center;top:784.16px;font-size:12.5px;color:#444;letter-spacing:-0.3px;-webkit-text-stroke:0">29</div>
<div class="t" style="left:80.06px;top:205.6px;font-size:13.5px;color:#3a3a3a;-webkit-text-stroke:0;transform:scaleX(0.9354)">Sheet2</div>
<div class="t" style="left:81.30px;top:226.85px;font-size:13.5px;color:#3a3a3a;-webkit-text-stroke:0;transform:scaleX(0.8789)">OK</div>
<div class="t" style="left:140.09px;top:226.85px;font-size:13.5px;color:#3a3a3a;-webkit-text-stroke:0;transform:scaleX(0.9053)">NG</div>
<div class="t" style="left:200.10px;top:226.85px;font-size:13.5px;color:#3a3a3a;-webkit-text-stroke:0;transform:scaleX(0.8789)">OK</div>
<div class="t" style="left:258.89px;top:226.85px;font-size:13.5px;color:#3a3a3a;-webkit-text-stroke:0;transform:scaleX(0.9053)">NG</div>
<div class="t" style="left:80.69px;top:247.47px;font-size:13.5px;color:#3a3a3a;-webkit-text-stroke:0;transform:scaleX(0.9053)">NG</div>
<div class="t" style="left:140.70px;top:247.47px;font-size:13.5px;color:#3a3a3a;-webkit-text-stroke:0;transform:scaleX(0.8789)">OK</div>
<div class="t" style="left:199.49px;top:247.47px;font-size:13.5px;color:#3a3a3a;-webkit-text-stroke:0;transform:scaleX(0.9053)">NG</div>
<div class="t" style="left:259.50px;top:247.47px;font-size:13.5px;color:#3a3a3a;-webkit-text-stroke:0;transform:scaleX(0.8789)">OK</div>
<div class="t" style="left:81.30px;top:268.09px;font-size:13.5px;color:#3a3a3a;-webkit-text-stroke:0;transform:scaleX(0.8789)">OK</div>
<div class="t" style="left:140.09px;top:268.09px;font-size:13.5px;color:#3a3a3a;-webkit-text-stroke:0;transform:scaleX(0.9053)">NG</div>
<div class="t" style="left:200.10px;top:268.09px;font-size:13.5px;color:#3a3a3a;-webkit-text-stroke:0;transform:scaleX(0.8789)">OK</div>
<div class="t" style="left:258.89px;top:268.09px;font-size:13.5px;color:#3a3a3a;-webkit-text-stroke:0;transform:scaleX(0.9053)">NG</div>
<div class="t" style="left:80.69px;top:288.71px;font-size:13.5px;color:#3a3a3a;-webkit-text-stroke:0;transform:scaleX(0.9053)">NG</div>
<div class="t" style="left:140.70px;top:288.71px;font-size:13.5px;color:#3a3a3a;-webkit-text-stroke:0;transform:scaleX(0.8789)">OK</div>
<div class="t" style="left:199.49px;top:288.71px;font-size:13.5px;color:#3a3a3a;-webkit-text-stroke:0;transform:scaleX(0.9053)">NG</div>
<div class="t" style="left:259.50px;top:288.71px;font-size:13.5px;color:#3a3a3a;-webkit-text-stroke:0;transform:scaleX(0.8789)">OK</div>
<div class="t" style="left:81.30px;top:309.33px;font-size:13.5px;color:#3a3a3a;-webkit-text-stroke:0;transform:scaleX(0.8789)">OK</div>
<div class="t" style="left:140.09px;top:309.33px;font-size:13.5px;color:#3a3a3a;-webkit-text-stroke:0;transform:scaleX(0.9053)">NG</div>
<div class="t" style="left:200.10px;top:309.33px;font-size:13.5px;color:#3a3a3a;-webkit-text-stroke:0;transform:scaleX(0.8789)">OK</div>
<div class="t" style="left:258.89px;top:309.33px;font-size:13.5px;color:#3a3a3a;-webkit-text-stroke:0;transform:scaleX(0.9053)">NG</div>
<div class="t" style="left:80.69px;top:329.95px;font-size:13.5px;color:#3a3a3a;-webkit-text-stroke:0;transform:scaleX(0.9053)">NG</div>
<div class="t" style="left:140.70px;top:329.95px;font-size:13.5px;color:#3a3a3a;-webkit-text-stroke:0;transform:scaleX(0.8789)">OK</div>
<div class="t" style="left:199.49px;top:329.95px;font-size:13.5px;color:#3a3a3a;-webkit-text-stroke:0;transform:scaleX(0.9053)">NG</div>
<div class="t" style="left:259.50px;top:329.95px;font-size:13.5px;color:#3a3a3a;-webkit-text-stroke:0;transform:scaleX(0.8789)">OK</div>
<div class="t" style="left:81.30px;top:350.57px;font-size:13.5px;color:#3a3a3a;-webkit-text-stroke:0;transform:scaleX(0.8789)">OK</div>
<div class="t" style="left:140.09px;top:350.57px;font-size:13.5px;color:#3a3a3a;-webkit-text-stroke:0;transform:scaleX(0.9053)">NG</div>
<div class="t" style="left:200.10px;top:350.57px;font-size:13.5px;color:#3a3a3a;-webkit-text-stroke:0;transform:scaleX(0.8789)">OK</div>
<div class="t" style="left:258.89px;top:350.57px;font-size:13.5px;color:#3a3a3a;-webkit-text-stroke:0;transform:scaleX(0.9053)">NG</div>
<div class="t" style="left:80.69px;top:371.19px;font-size:13.5px;color:#3a3a3a;-webkit-text-stroke:0;transform:scaleX(0.9053)">NG</div>
<div class="t" style="left:140.70px;top:371.19px;font-size:13.5px;color:#3a3a3a;-webkit-text-stroke:0;transform:scaleX(0.8789)">OK</div>
<div class="t" style="left:199.49px;top:371.19px;font-size:13.5px;color:#3a3a3a;-webkit-text-stroke:0;transform:scaleX(0.9053)">NG</div>
<div class="t" style="left:259.50px;top:371.19px;font-size:13.5px;color:#3a3a3a;-webkit-text-stroke:0;transform:scaleX(0.8789)">OK</div>
<div class="t" style="left:81.30px;top:391.81px;font-size:13.5px;color:#3a3a3a;-webkit-text-stroke:0;transform:scaleX(0.8789)">OK</div>
<div class="t" style="left:140.09px;top:391.81px;font-size:13.5px;color:#3a3a3a;-webkit-text-stroke:0;transform:scaleX(0.9053)">NG</div>
<div class="t" style="left:200.10px;top:391.81px;font-size:13.5px;color:#3a3a3a;-webkit-text-stroke:0;transform:scaleX(0.8789)">OK</div>
<div class="t" style="left:258.89px;top:391.81px;font-size:13.5px;color:#3a3a3a;-webkit-text-stroke:0;transform:scaleX(0.9053)">NG</div>
<div class="t" style="left:80.69px;top:412.43px;font-size:13.5px;color:#3a3a3a;-webkit-text-stroke:0;transform:scaleX(0.9053)">NG</div>
<div class="t" style="left:140.70px;top:412.43px;font-size:13.5px;color:#3a3a3a;-webkit-text-stroke:0;transform:scaleX(0.8789)">OK</div>
<div class="t" style="left:199.49px;top:412.43px;font-size:13.5px;color:#3a3a3a;-webkit-text-stroke:0;transform:scaleX(0.9053)">NG</div>
<div class="t" style="left:259.50px;top:412.43px;font-size:13.5px;color:#3a3a3a;-webkit-text-stroke:0;transform:scaleX(0.8789)">OK</div>
<div class="t" style="left:81.30px;top:433.05px;font-size:13.5px;color:#3a3a3a;-webkit-text-stroke:0;transform:scaleX(0.8789)">OK</div>
<div class="t" style="left:140.09px;top:433.05px;font-size:13.5px;color:#3a3a3a;-webkit-text-stroke:0;transform:scaleX(0.9053)">NG</div>
<div class="t" style="left:200.10px;top:433.05px;font-size:13.5px;color:#3a3a3a;-webkit-text-stroke:0;transform:scaleX(0.8789)">OK</div>
<div class="t" style="left:258.89px;top:433.05px;font-size:13.5px;color:#3a3a3a;-webkit-text-stroke:0;transform:scaleX(0.9053)">NG</div>
<div class="t" style="left:80.69px;top:453.67px;font-size:13.5px;color:#3a3a3a;-webkit-text-stroke:0;transform:scaleX(0.9053)">NG</div>
<div class="t" style="left:140.70px;top:453.67px;font-size:13.5px;color:#3a3a3a;-webkit-text-stroke:0;transform:scaleX(0.8789)">OK</div>
<div class="t" style="left:199.49px;top:453.67px;font-size:13.5px;color:#3a3a3a;-webkit-text-stroke:0;transform:scaleX(0.9053)">NG</div>
<div class="t" style="left:259.50px;top:453.67px;font-size:13.5px;color:#3a3a3a;-webkit-text-stroke:0;transform:scaleX(0.8789)">OK</div>
<div class="t" style="left:81.30px;top:474.29px;font-size:13.5px;color:#3a3a3a;-webkit-text-stroke:0;transform:scaleX(0.8789)">OK</div>
<div class="t" style="left:140.09px;top:474.29px;font-size:13.5px;color:#3a3a3a;-webkit-text-stroke:0;transform:scaleX(0.9053)">NG</div>
<div class="t" style="left:200.10px;top:474.29px;font-size:13.5px;color:#3a3a3a;-webkit-text-stroke:0;transform:scaleX(0.8789)">OK</div>
<div class="t" style="left:258.89px;top:474.29px;font-size:13.5px;color:#3a3a3a;-webkit-text-stroke:0;transform:scaleX(0.9053)">NG</div>
<div class="t" style="left:80.69px;top:494.91px;font-size:13.5px;color:#3a3a3a;-webkit-text-stroke:0;transform:scaleX(0.9053)">NG</div>
<div class="t" style="left:140.70px;top:494.91px;font-size:13.5px;color:#3a3a3a;-webkit-text-stroke:0;transform:scaleX(0.8789)">OK</div>
<div class="t" style="left:199.49px;top:494.91px;font-size:13.5px;color:#3a3a3a;-webkit-text-stroke:0;transform:scaleX(0.9053)">NG</div>
<div class="t" style="left:259.50px;top:494.91px;font-size:13.5px;color:#3a3a3a;-webkit-text-stroke:0;transform:scaleX(0.8789)">OK</div>
<div class="t" style="left:81.30px;top:515.53px;font-size:13.5px;color:#3a3a3a;-webkit-text-stroke:0;transform:scaleX(0.8789)">OK</div>
<div class="t" style="left:140.09px;top:515.53px;font-size:13.5px;color:#3a3a3a;-webkit-text-stroke:0;transform:scaleX(0.9053)">NG</div>
<div class="t" style="left:200.10px;top:515.53px;font-size:13.5px;color:#3a3a3a;-webkit-text-stroke:0;transform:scaleX(0.8789)">OK</div>
<div class="t" style="left:258.89px;top:515.53px;font-size:13.5px;color:#3a3a3a;-webkit-text-stroke:0;transform:scaleX(0.9053)">NG</div>
<div class="t" style="left:80.69px;top:536.15px;font-size:13.5px;color:#3a3a3a;-webkit-text-stroke:0;transform:scaleX(0.9053)">NG</div>
<div class="t" style="left:140.70px;top:536.15px;font-size:13.5px;color:#3a3a3a;-webkit-text-stroke:0;transform:scaleX(0.8789)">OK</div>
<div class="t" style="left:199.49px;top:536.15px;font-size:13.5px;color:#3a3a3a;-webkit-text-stroke:0;transform:scaleX(0.9053)">NG</div>
<div class="t" style="left:259.50px;top:536.15px;font-size:13.5px;color:#3a3a3a;-webkit-text-stroke:0;transform:scaleX(0.8789)">OK</div>
<div class="t" style="left:81.30px;top:556.77px;font-size:13.5px;color:#3a3a3a;-webkit-text-stroke:0;transform:scaleX(0.8789)">OK</div>
<div class="t" style="left:140.09px;top:556.77px;font-size:13.5px;color:#3a3a3a;-webkit-text-stroke:0;transform:scaleX(0.9053)">NG</div>
<div class="t" style="left:200.10px;top:556.77px;font-size:13.5px;color:#3a3a3a;-webkit-text-stroke:0;transform:scaleX(0.8789)">OK</div>
<div class="t" style="left:258.89px;top:556.77px;font-size:13.5px;color:#3a3a3a;-webkit-text-stroke:0;transform:scaleX(0.9053)">NG</div>
<div class="t" style="left:80.69px;top:577.39px;font-size:13.5px;color:#3a3a3a;-webkit-text-stroke:0;transform:scaleX(0.9053)">NG</div>
<div class="t" style="left:140.70px;top:577.39px;font-size:13.5px;color:#3a3a3a;-webkit-text-stroke:0;transform:scaleX(0.8789)">OK</div>
<div class="t" style="left:199.49px;top:577.39px;font-size:13.5px;color:#3a3a3a;-webkit-text-stroke:0;transform:scaleX(0.9053)">NG</div>
<div class="t" style="left:259.50px;top:577.39px;font-size:13.5px;color:#3a3a3a;-webkit-text-stroke:0;transform:scaleX(0.8789)">OK</div>
<svg style="left:0;top:0" width="1" height="1"><rect x="197.1" y="325.9" width="60.1" height="21" fill="none" stroke="#217346" stroke-width="1.8"/><rect x="254.8" y="344.5" width="4.4" height="4.4" fill="#217346"/></svg>
<div class="a" style="left:0;top:803px;width:1024px;height:26px;background:#f0f0f0"></div>
<div class="a" style="left:0;top:829px;width:1024px;height:1.5px;background:#d9d9d9"></div>
<div class="a" style="left:0;top:830.5px;width:1024px;height:3px;background:#f5f5f5"></div>
<div class="t" style="left:98.79px;top:811.4px;font-size:12.5px;font-weight:400;color:#333;transform:scaleX(1.0053);-webkit-text-stroke:0;color:#444;">Sheet1</div>
<div class="a" style="left:151px;top:810px;width:1px;height:14px;background:#c8c8c8"></div>
<div class="a" style="left:154.5px;top:803px;width:57.5px;height:22.6px;background:#fff;border-radius:0 0 4px 4px;box-shadow:0 1px 1px rgba(0,0,0,.08)"></div>
<div class="t" style="left:162.48px;top:809.0px;font-size:12.5px;font-weight:400;color:#333;transform:scaleX(1.0211);-webkit-text-stroke:0;color:#444;">Sheet2</div>
<div class="a" style="left:162px;top:821.8px;width:42.5px;height:1.8px;background:#24864c"></div>
<div class="a" style="left:214.5px;top:810px;width:1px;height:14px;background:#c8c8c8"></div>
<svg style="left:0;top:0" width="1" height="1"><path d="M24.5 812 L20 816 L24.5 820 M47 812 L51.5 816 L47 820" stroke="#a8a8a8" stroke-width="1.1" fill="none"/><path d="M254.7 811.4 V821 M250 816.2 H259.4" stroke="#444" stroke-width="1.1"/></svg>
<div class="a" style="left:948px;top:813px;width:2px;height:2px;background:#333"></div><div class="a" style="left:948px;top:816.5px;width:2px;height:2px;background:#333"></div><div class="a" style="left:948px;top:820px;width:2px;height:2px;background:#333"></div>
<div class="a" style="left:963px;top:809.3px;width:80px;height:13.2px;background:#f7f7f7;border-radius:7px"></div>
<svg style="left:0;top:0" width="1" height="1"><path d="M971.8 812.9 L966.2 816.2 L971.8 819.5 Z" fill="#707070"/></svg>
<div class="a" style="left:976px;top:812.3px;width:60px;height:7.7px;background:#737373;border-radius:4px"></div>
<div class="a" style="left:821.9px;top:127.3px;width:171.7px;height:250.4px;background:#fff;border:1px solid #8f8f8f;border-radius:5px;box-shadow:0 3px 8px rgba(0,0,0,.18)"></div>
<div class="t" style="left:864.0px;top:142.8px;font-size:10.5px;font-weight:700;color:#262626;transform:scaleX(0.8182);-webkit-text-stroke:0;">セルの強調表示ルール</div>
<div class="t" style="left:955.2px;top:143.05px;font-size:11.0px;font-weight:700;color:#262626;transform:scaleX(1.14);-webkit-text-stroke:0;">(H)</div>
<div class="t" style="left:864.8px;top:177.5px;font-size:10.5px;font-weight:700;color:#262626;transform:scaleX(0.8775);-webkit-text-stroke:0;">上位/下位ルール</div>
<div class="t" style="left:935.9px;top:177.25px;font-size:11.0px;font-weight:700;color:#262626;transform:scaleX(1.0643);-webkit-text-stroke:0;">(T)</div>
<div class="t" style="left:864.0px;top:214.85px;font-size:10.5px;font-weight:700;color:#262626;transform:scaleX(0.7656);-webkit-text-stroke:0;">データ</div>
<div class="t" style="left:893.1px;top:215.35px;font-size:10.5px;font-weight:700;color:#262626;transform:scaleX(0.7773);-webkit-text-stroke:0;">バー</div>
<div class="t" style="left:911.6px;top:214.35px;font-size:11.0px;font-weight:700;color:#262626;transform:scaleX(1.0667);-webkit-text-stroke:0;">(D)</div>
<div class="t" style="left:863.16px;top:248.6px;font-size:10.5px;font-weight:700;color:#262626;transform:scaleX(0.8375);-webkit-text-stroke:0;">カラー</div>
<div class="t" style="left:891.12px;top:249.1px;font-size:10.5px;font-weight:700;color:#262626;transform:scaleX(0.7837);-webkit-text-stroke:0;">スケール</div>
<div class="t" style="left:926.6px;top:248.65px;font-size:11.0px;font-weight:700;color:#262626;transform:scaleX(1.0643);-webkit-text-stroke:0;">(S)</div>
<div class="t" style="left:863.28px;top:282.9px;font-size:10.5px;font-weight:700;color:#262626;transform:scaleX(0.7163);-webkit-text-stroke:0;">アイコン</div>
<div class="t" style="left:899.3px;top:282.9px;font-size:10.5px;font-weight:700;color:#262626;transform:scaleX(0.7);-webkit-text-stroke:0;">セット</div>
<div class="t" style="left:921.3px;top:282.95px;font-size:11.0px;font-weight:700;color:#262626;transform:scaleX(1.36);-webkit-text-stroke:0;">(I)</div>
<div class="t" style="left:853.03px;top:336.8px;font-size:10.0px;font-weight:400;color:#333;transform:scaleX(0.7721);-webkit-text-stroke:0.08px;color:#3c3c3c;">ルールのクリア</div>
<div class="t" style="left:905.91px;top:335.8px;font-size:11.0px;font-weight:400;color:#333;transform:scaleX(0.9929);-webkit-text-stroke:0.08px;color:#3c3c3c;">(C)</div>
<div class="t" style="left:852.91px;top:360.05px;font-size:10.0px;font-weight:400;color:#333;transform:scaleX(0.8898);-webkit-text-stroke:0.08px;color:#3c3c3c;">ルールの管理</div>
<div class="t" style="left:905.87px;top:358.5px;font-size:11.0px;font-weight:400;color:#333;transform:scaleX(1.0304);-webkit-text-stroke:0.08px;color:#3c3c3c;">(R)...</div>
<svg style="left:0;top:0" width="1" height="1"><defs><clipPath id="c5"><rect x="830" y="270" width="40" height="24"/></clipPath></defs><path d="M981.2 142.9 L985.2 145.64999999999998 L981.2 148.39999999999998" stroke="#444" stroke-width="1.1" fill="none"/><path d="M981.2 178.0 L985.2 180.8 L981.2 183.6" stroke="#444" stroke-width="1.1" fill="none"/><path d="M981.2 214.9 L985.2 217.95 L981.2 221.0" stroke="#444" stroke-width="1.1" fill="none"/><path d="M981.2 248.9 L985.2 251.8 L981.2 254.7" stroke="#444" stroke-width="1.1" fill="none"/><path d="M981.2 283.2 L985.2 286.6 L981.2 290.0" stroke="#444" stroke-width="1.1" fill="none"/><path d="M981.2 337.90000000000003 L985.2 340.8 L981.2 343.7" stroke="#444" stroke-width="1.1" fill="none"/><path d="M860.4 199.4 H991.4" stroke="#e3e3e3" stroke-width="1"/><path d="M835 305.3 H991" stroke="#e3e3e3" stroke-width="1"/><rect x="835.4" y="137.2" width="22.3" height="17.4" fill="#f8f8f8"/><rect x="835.4" y="137.2" width="22.300000000000068" height="17.400000000000006" fill="none" stroke="#555" stroke-width="1"/><path d="M841.5 137.2 V154.6" stroke="#666" stroke-width="0.9"/><path d="M851.8 137.2 V154.6" stroke="#666" stroke-width="0.9"/><path d="M835.4 142.7 H857.7" stroke="#777" stroke-width="0.9"/><path d="M835.4 148.6 H857.7" stroke="#777" stroke-width="0.9"/><rect x="841.5" y="142.7" width="10.3" height="5.9" fill="#fde3a0" stroke="#f0a030" stroke-width="1"/><rect x="845.7" y="148.3" width="13.6" height="9.9" fill="#fff" stroke="#555" stroke-width="1"/><path d="M854.6 150.6 L850.8 152.6 L854.6 154.6 M850.8 156 H854.6" stroke="#555" stroke-width="0.8" fill="none"/><rect x="835.4" y="171.6" width="22.3" height="17.8" fill="#f8f8f8"/><rect x="835.4" y="171.6" width="22.300000000000068" height="17.80000000000001" fill="none" stroke="#555" stroke-width="1"/><path d="M841.5 171.6 V189.4" stroke="#666" stroke-width="0.9"/><path d="M851.8 171.6 V189.4" stroke="#666" stroke-width="0.9"/><path d="M835.4 177.6 H857.7" stroke="#777" stroke-width="0.9"/><path d="M835.4 183.5 H857.7" stroke="#777" stroke-width="0.9"/><rect x="841.5" y="171.6" width="10.3" height="17.8" fill="#fde3a0" stroke="#f0a030" stroke-width="1"/><path d="M846.3 181.5 V172.8 M843 176 L846.3 172.6 L849.6 176" stroke="#555" stroke-width="1" fill="none"/><rect x="845.7" y="182.7" width="13.6" height="10.3" fill="#fff" stroke="#555" stroke-width="1"/><rect x="835.2" y="208.6" width="22.4" height="17.9" fill="#f8f8f8"/><rect x="835.2" y="208.6" width="22.399999999999977" height="17.900000000000006" fill="none" stroke="#555" stroke-width="1"/><path d="M839.2 208.6 V226.5" stroke="#666" stroke-width="0.9"/><path d="M853.6 208.6 V226.5" stroke="#666" stroke-width="0.9"/><path d="M835.2 214.6 H857.6" stroke="#777" stroke-width="0.9"/><path d="M835.2 220.7 H857.6" stroke="#777" stroke-width="0.9"/><path d="M839.2 208.6 H846.7 V214.6 H842.1 V220.7 H844.4 V226.5 H839.2 Z" fill="#7ab6ec" stroke="#2f82d6" stroke-width="0.9"/><rect x="835.2" y="243.2" width="22.4" height="17.8" fill="#f8f8f8"/><rect x="839.2" y="243.2" width="14.4" height="6.3" fill="#7ab6ec" stroke="#2f82d6" stroke-width="0.9"/><rect x="839.2" y="249.5" width="14.4" height="5.8" fill="#fcd88a" stroke="#f0a030" stroke-width="0.9"/><rect x="839.2" y="255.3" width="14.4" height="5.7" fill="#f9a0a8" stroke="#e0303e" stroke-width="0.9"/><rect x="835.2" y="243.2" width="22.399999999999977" height="17.80000000000001" fill="none" stroke="#555" stroke-width="1"/><path d="M835.2 249.5 H857.6" stroke="#666" stroke-width="0.9"/><path d="M835.2 255.3 H857.6" stroke="#666" stroke-width="0.9"/><path d="M839.2 243.2 V261 M853.6 243.2 V261" stroke="#555" stroke-width="0.5"/><rect x="835.2" y="278.3" width="22.4" height="16" fill="#f8f8f8"/><rect clip-path="url(#c5)" x="835.2" y="278.3" width="22.399999999999977" height="21.69999999999999" fill="none" stroke="#555" stroke-width="1"/><path clip-path="url(#c5)" d="M839.2 278.3 V300" stroke="#666" stroke-width="0.9"/><path clip-path="url(#c5)" d="M853.6 278.3 V300" stroke="#666" stroke-width="0.9"/><path clip-path="url(#c5)" d="M835.2 284.6 H857.6" stroke="#777" stroke-width="0.9"/><path clip-path="url(#c5)" d="M835.2 290.3 H857.6" stroke="#777" stroke-width="0.9"/><circle cx="842.1" cy="280.9" r="1" fill="#2f82d6"/><circle cx="842.1" cy="286.6" r="1" fill="#e83838"/><circle cx="842.1" cy="292.2" r="1" fill="#2f82d6"/><path d="M847.9 281.2 H851.9 M847.9 286.9 H851.9 M847.9 292.5 H851.9" stroke="#666" stroke-width="0.9"/><path d="M959.6 153.3 H967.9" stroke="#333" stroke-width="1"/><path d="M940.3 188.0 H946.4" stroke="#333" stroke-width="1"/><path d="M916.6 225.0 H923.7" stroke="#333" stroke-width="1"/><path d="M931 259.5 H937.1" stroke="#333" stroke-width="1"/><path d="M925.7 293.8 H931.8" stroke="#333" stroke-width="1"/></svg>
<div class="t" style="left:848.3px;top:184.4px;font-size:8.5px;color:#555;letter-spacing:-0.4px">10</div>
<div class="a" style="left:824px;top:306px;width:168px;height:22px;background:#f5f5f5"></div>
<div class="t" style="left:853.8px;top:313.6px;font-size:10.0px;font-weight:400;color:#333;transform:scaleX(0.8417);-webkit-text-stroke:0.08px;color:#3c3c3c;">新しいルール</div>
<div class="t" style="left:903.85px;top:312.6px;font-size:11.0px;font-weight:400;color:#333;transform:scaleX(1.0478);-webkit-text-stroke:0.08px;color:#3c3c3c;">(N)...</div>
<svg style="left:0;top:0" width="1" height="1"><rect x="833.5" y="312.2" width="12.799999999999955" height="10.400000000000034" rx="1.2" fill="#fff" stroke="#555" stroke-width="1"/><rect x="837.7666666666667" y="315.6666666666667" width="4.2666666666666515" height="3.466666666666678" fill="#fcd27a" stroke="#f08a30" stroke-width="0.9"/><path d="M837.7666666666667 312.2 V322.6 M833.5 315.6666666666667 H846.3" stroke="#666" stroke-width="0.9"/><path d="M842.0333333333333 312.2 V322.6 M833.5 319.1333333333333 H846.3" stroke="#666" stroke-width="0.9"/><rect x="837.7666666666667" y="315.6666666666667" width="4.2666666666666515" height="3.466666666666678" fill="#fcd27a" stroke="#f08a30" stroke-width="0.9"/><rect x="833.5" y="335.6" width="12.799999999999955" height="10.599999999999966" rx="1.2" fill="#fff" stroke="#555" stroke-width="1"/><rect x="837.7666666666667" y="339.1333333333333" width="4.2666666666666515" height="3.533333333333322" fill="#fcd27a" stroke="#f08a30" stroke-width="0.9"/><path d="M837.7666666666667 335.6 V346.2 M833.5 339.1333333333333 H846.3" stroke="#666" stroke-width="0.9"/><path d="M842.0333333333333 335.6 V346.2 M833.5 342.6666666666667 H846.3" stroke="#666" stroke-width="0.9"/><rect x="837.7666666666667" y="339.1333333333333" width="4.2666666666666515" height="3.533333333333322" fill="#fcd27a" stroke="#f08a30" stroke-width="0.9"/><path d="M838.6 345.2 L844.4 339.4 C845 338.8 845.8 338.8 846.4 339.4 L847.6 340.6 C848.2 341.2 848.2 342 847.6 342.6 L841.8 348.4 C841.2 349 840.4 349 839.8 348.4 L838.6 347.2 C838 346.6 838 345.8 838.6 345.2 Z" fill="#c070d8" stroke="#fff" stroke-width="0.7"/><path d="M842 344.4 L844 342.4" stroke="#fff" stroke-width="1.2"/><path d="M833.2 369 V357.4 H844.8" stroke="#666" stroke-width="0.9" fill="none"/><rect x="835" y="358.8" width="11.299999999999955" height="10.599999999999966" rx="1.2" fill="#fff" stroke="#555" stroke-width="1"/><rect x="838.7666666666667" y="362.3333333333333" width="3.7666666666666515" height="3.533333333333322" fill="#fcd27a" stroke="#f08a30" stroke-width="0.9"/><path d="M838.7666666666667 358.8 V369.4 M835 362.3333333333333 H846.3" stroke="#666" stroke-width="0.9"/><path d="M842.5333333333333 358.8 V369.4 M835 365.8666666666667 H846.3" stroke="#666" stroke-width="0.9"/><rect x="838.7666666666667" y="362.3333333333333" width="3.7666666666666515" height="3.533333333333322" fill="#fcd27a" stroke="#f08a30" stroke-width="0.9"/><path d="M908.6 322.2 H915.1" stroke="#444" stroke-width="0.9"/><path d="M910.6 345.4 H917.6" stroke="#444" stroke-width="0.9"/><path d="M911 368.3 H917.6" stroke="#444" stroke-width="0.9"/></svg>
<svg style="left:0;top:0;filter:drop-shadow(0.5px 2px 3px rgba(0,0,0,.45))" width="1" height="1">
<rect x="813.1" y="54.7" width="63.8" height="79.4" rx="5" fill="none" stroke="#f0306e" stroke-width="3.2"/>
<rect x="813.1" y="295.6" width="192" height="41" rx="5" fill="none" stroke="#f0306e" stroke-width="3.2"/>
</svg>
<div style="position:absolute;left:0;top:0;filter:drop-shadow(1.5px 2px 1.5px rgba(0,0,0,.3))">
<div class="t" style="left:407.50px;top:662.8px;width:30px;text-align:center;font-size:20.5px;color:#f00;-webkit-text-stroke:0.35px #f00;transform-origin:50% 0;transform:scaleX(1.12)">注</div><div class="t" style="left:435.10px;top:662.8px;width:30px;text-align:center;font-size:20.5px;color:#f00;-webkit-text-stroke:0.35px #f00;transform-origin:50% 0;transform:scaleX(1.12)">意</div><div class="t" style="left:479.50px;top:662.8px;width:30px;text-align:center;font-size:20.5px;color:#f00;-webkit-text-stroke:0.35px #f00;transform-origin:50% 0;transform:scaleX(1.12)">色</div><div class="t" style="left:502.80px;top:662.8px;width:30px;text-align:center;font-size:20.5px;color:#f00;-webkit-text-stroke:0.35px #f00;transform-origin:50% 0;transform:scaleX(1.0)">を</div><div class="t" style="left:522.50px;top:662.8px;width:30px;text-align:center;font-size:20.5px;color:#f00;-webkit-text-stroke:0.35px #f00;transform-origin:50% 0;transform:scaleX(1.12)">付</div><div class="t" style="left:548.90px;top:662.8px;width:30px;text-align:center;font-size:20.5px;color:#f00;-webkit-text-stroke:0.35px #f00;transform-origin:50% 0;transform:scaleX(1.0)">け</div><div class="t" style="left:569.75px;top:662.8px;width:30px;text-align:center;font-size:20.5px;color:#f00;-webkit-text-stroke:0.35px #f00;transform-origin:50% 0;transform:scaleX(1.0)">た</div><div class="t" style="left:588.55px;top:662.8px;width:30px;text-align:center;font-size:20.5px;color:#f00;-webkit-text-stroke:0.35px #f00;transform-origin:50% 0;transform:scaleX(1.0)">い</div><div class="t" style="left:611.15px;top:662.8px;width:30px;text-align:center;font-size:20.5px;color:#f00;-webkit-text-stroke:0.35px #f00;transform-origin:50% 0;transform:scaleX(1.0)">シ</div><div class="t" style="left:631.65px;top:662.8px;width:30px;text-align:center;font-size:20.5px;color:#f00;-webkit-text-stroke:0.35px #f00;transform-origin:50% 0;transform:scaleX(1.25)">ー</div><div class="t" style="left:654.20px;top:662.8px;width:30px;text-align:center;font-size:20.5px;color:#f00;-webkit-text-stroke:0.35px #f00;transform-origin:50% 0;transform:scaleX(1.25)">ト</div>
<div class="t" style="left:407.10px;top:689.8px;width:30px;text-align:center;font-size:20.5px;color:#f00;-webkit-text-stroke:0.35px #f00;transform-origin:50% 0;transform:scaleX(1.0)">が</div><div class="t" style="left:431.30px;top:689.8px;width:30px;text-align:center;font-size:20.5px;color:#f00;-webkit-text-stroke:0.35px #f00;transform-origin:50% 0;transform:scaleX(1.12)">選</div><div class="t" style="left:457.70px;top:689.8px;width:30px;text-align:center;font-size:20.5px;color:#f00;-webkit-text-stroke:0.35px #f00;transform-origin:50% 0;transform:scaleX(1.12)">択</div><div class="t" style="left:480.20px;top:689.8px;width:30px;text-align:center;font-size:20.5px;color:#f00;-webkit-text-stroke:0.35px #f00;transform-origin:50% 0;transform:scaleX(1.0)">さ</div><div class="t" style="left:500.70px;top:689.8px;width:30px;text-align:center;font-size:20.5px;color:#f00;-webkit-text-stroke:0.35px #f00;transform-origin:50% 0;transform:scaleX(1.0)">れ</div><div class="t" style="left:521.25px;top:689.8px;width:30px;text-align:center;font-size:20.5px;color:#f00;-webkit-text-stroke:0.35px #f00;transform-origin:50% 0;transform:scaleX(1.0)">て</div><div class="t" style="left:539.40px;top:689.8px;width:30px;text-align:center;font-size:20.5px;color:#f00;-webkit-text-stroke:0.35px #f00;transform-origin:50% 0;transform:scaleX(1.0)">い</div><div class="t" style="left:563.95px;top:689.8px;width:30px;text-align:center;font-size:20.5px;color:#f00;-webkit-text-stroke:0.35px #f00;transform-origin:50% 0;transform:scaleX(1.0)">る</div><div class="t" style="left:583.80px;top:689.8px;width:30px;text-align:center;font-size:20.5px;color:#f00;-webkit-text-stroke:0.35px #f00;transform-origin:50% 0;transform:scaleX(1.0)">か</div>
</div>
<svg style="left:0;top:0;filter:drop-shadow(2px 3px 3px rgba(0,0,0,.3))" width="1" height="1">
<defs><linearGradient id="ag" x1="368.5" y1="693.4" x2="209.5" y2="789.8" gradientUnits="userSpaceOnUse">
<stop offset="0" stop-color="#ff0000" stop-opacity="0"/><stop offset="0.15" stop-color="#e84050" stop-opacity=".45"/><stop offset="0.6" stop-color="#e83038" stop-opacity=".9"/><stop offset="1" stop-color="#ff0000"/></linearGradient></defs>
<path d="M368.5 693.4 L231.2 787 L234 793.6 L209.5 789.8 L217.3 765.7 L221 770.7 Z" fill="url(#ag)"/>
</svg>
</body></html>
